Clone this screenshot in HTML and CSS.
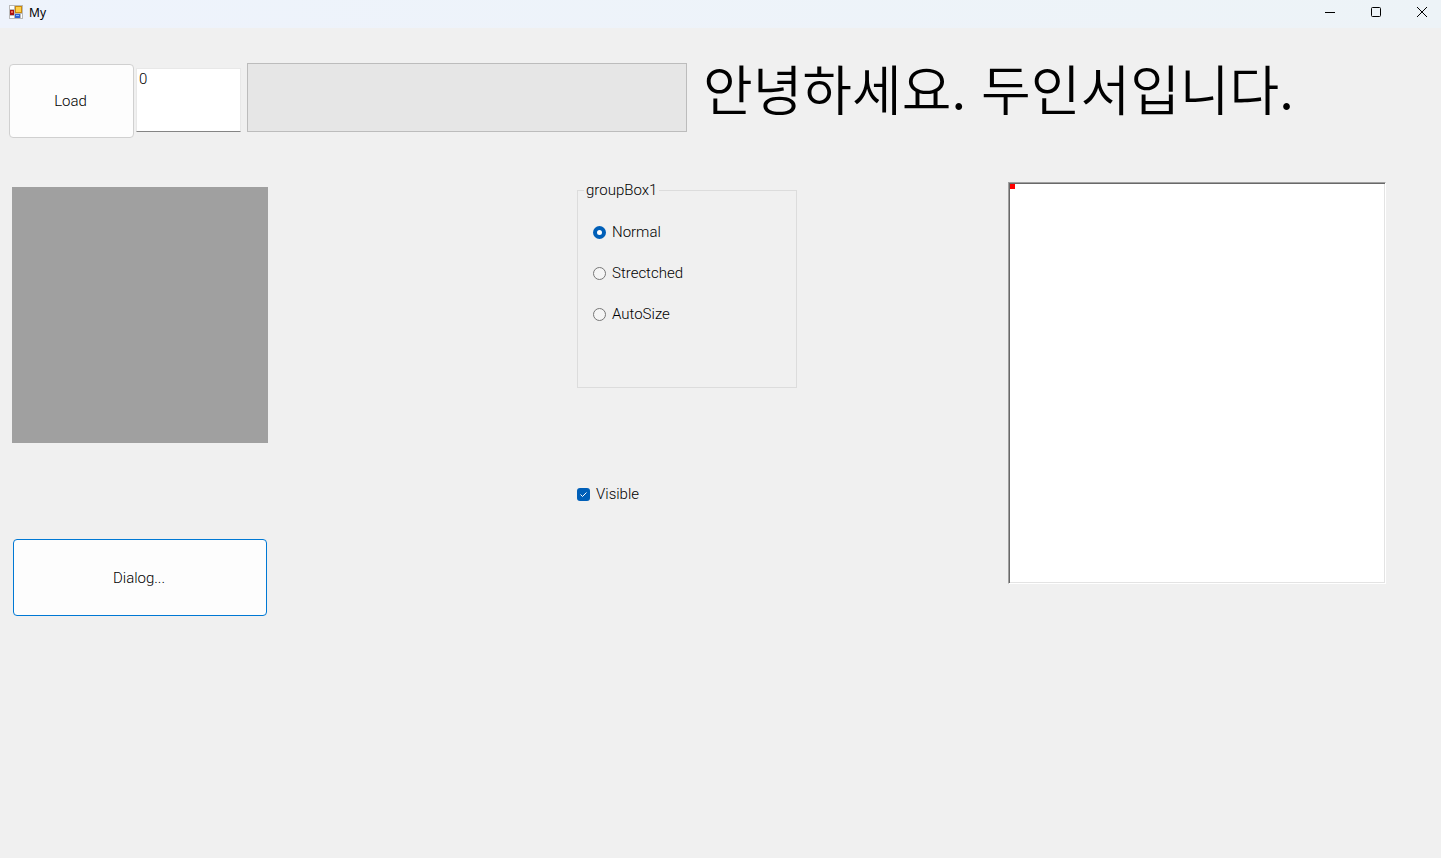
FILE: index.html
```html
<!DOCTYPE html>
<html lang="ko">
<head>
<meta charset="utf-8">
<meta name="viewport" content="width=device-width, initial-scale=1">
<title>My</title>
<link rel="stylesheet" href="styles.css">
</head>
<body>
<header class="titlebar">
  <svg class="app-icon" viewBox="0 0 14 14" aria-hidden="true">
    <rect width="14" height="14" fill="#b9b9b9"/>
    <path d="M1 1h4v3H1zM1 11h4v2H1zM12 9h1v4h-1z" fill="#fff"/>
    <rect x="6" y="1" width="7" height="7" fill="#c98a10"/>
    <rect x="7" y="2" width="5" height="5" fill="#ffd04a"/>
    <rect x="1" y="5" width="4" height="5" fill="#a91010"/>
    <rect x="2" y="6" width="2" height="2" fill="#f06a50"/>
    <rect x="6" y="9" width="5" height="4" fill="#2e62d0"/>
    <rect x="7" y="10" width="3" height="1" fill="#8ab8ff"/>
  </svg>
  <h1 class="title">My</h1>
  <div class="window-buttons">
    <button class="window-button" type="button" aria-label="Minimize"><svg class="glyph" viewBox="0 0 12 12"><path d="M1 6.5h10"/></svg></button>
    <button class="window-button" type="button" aria-label="Maximize"><svg class="glyph" viewBox="0 0 12 12"><rect x="1.5" y="1.5" width="9" height="9" rx="1"/></svg></button>
    <button class="window-button" type="button" aria-label="Close"><svg class="glyph" viewBox="0 0 12 12"><path d="M1 1l10 10M11 1L1 11"/></svg></button>
  </div>
</header>
<main class="form">
  <section class="toolbar">
    <button class="button load" type="button">Load</button>
    <textarea class="number" aria-label="Value">0</textarea>
    <div class="progress" role="progressbar" aria-label="Progress" aria-valuenow="0"></div>
    <p class="greeting">안녕하세요. 두인서입니다.</p>
  </section>
  <section class="content">
    <div class="column">
      <div class="picture"></div>
      <button class="button dialog" type="button">Dialog...</button>
    </div>
    <div class="column">
      <fieldset class="group">
        <legend class="legend">groupBox1</legend>
        <label class="option"><input class="radio" type="radio" name="mode" checked>Normal</label>
        <label class="option"><input class="radio" type="radio" name="mode">Strectched</label>
        <label class="option"><input class="radio" type="radio" name="mode">AutoSize</label>
      </fieldset>
      <label class="option visible">
        <span class="checkbox">
          <input class="check" type="checkbox" checked>
          <svg class="tick" viewBox="0 0 13 13" aria-hidden="true"><path d="M3.5 6.5l2 2 4-4"/></svg>
        </span>Visible</label>
    </div>
    <div class="column">
      <div class="panel"><div class="marker"></div></div>
    </div>
  </section>
</main>
</body>
</html>
```
FILE: styles.css
```css
* { box-sizing: border-box; }
body {
  margin: 0;
  min-height: 100vh;
  background: #f0f0f0;
  color: #000;
  font: 300 15px/20px Roboto, "Noto Sans CJK KR", sans-serif;
}
button, textarea { font: inherit; color: inherit; }
.titlebar {
  display: flex;
  align-items: center;
  height: 28px;
  padding-left: 9px;
  background: linear-gradient(90deg, #eef3fc, #edf3f7);
}
.app-icon { width: 14px; height: 14px; margin-bottom: 4px; }
.title { margin: 0 0 3px 6px; font: 400 12px/16px "Noto Sans", sans-serif; }
.window-buttons { display: flex; margin-left: auto; }
.window-button {
  display: flex;
  justify-content: center;
  align-items: center;
  width: 46px;
  height: 28px;
  padding: 0 0 4px 8px;
  border: 0;
  background: none;
}
.glyph { width: 12px; height: 12px; fill: none; stroke: #000; stroke-width: 1; }
.toolbar {
  display: flex;
  align-items: flex-start;
  padding: 35px 9px 0;
}
.button {
  border: 1px solid #d0d0d0;
  border-radius: 4px;
  background: #fdfdfd;
}
.load { width: 125px; height: 74px; margin-top: 1px; padding: 0 2px 0 0; }
.number {
  width: 105px;
  height: 64px;
  margin: 5px 6px 0 2px;
  padding: 0 2px;
  border: 1px solid #e8e8e8;
  border-bottom-color: #858585;
  background: #fff;
  resize: none;
  overflow: hidden;
}
.progress {
  width: 440px;
  height: 69px;
  border: 1px solid #bcbcbc;
  background: #e6e6e6;
}
.greeting {
  margin: 0 0 0 16px;
  font: 350 54px/50px "Noto Sans CJK KR DemiLight", "Noto Sans CJK KR", sans-serif;
  white-space: nowrap;
}
.content {
  display: grid;
  grid-template-columns: 565fr 431fr 421fr;
  padding: 44px 12px 24px;
}
.column { display: flex; flex-direction: column; align-items: flex-start; }
.picture { width: 256px; height: 256px; margin-top: 5px; background: #a0a0a0; }
.dialog {
  width: 254px;
  height: 77px;
  margin: 96px 0 0 1px;
  padding: 0 2px 0 0;
  border-color: #0078d4;
}
.group {
  display: flex;
  flex-direction: column;
  gap: 21px;
  width: 220px;
  height: 208px;
  margin: -2px 0 0;
  padding: 22px 15px;
  border: 1px solid #dcdcdc;
}
.legend { margin-left: -9px; padding: 0 2px; }
.option { display: flex; align-items: center; gap: 6px; }
.radio {
  appearance: none;
  width: 13px;
  height: 13px;
  margin: 0;
  border: 1px solid #777;
  border-radius: 50%;
  background: #f5f5f5;
}
.radio:checked { border: 4px solid #005fb8; background: #fff; }
.visible { margin-top: 96px; }
.checkbox { display: grid; }
.check, .tick { grid-area: 1 / 1; width: 13px; height: 13px; margin: 0; }
.check { appearance: none; border-radius: 3px; background: #005fb8; }
.tick { fill: none; stroke: none; pointer-events: none; }
.check:checked + .tick { stroke: #fff; }
.panel {
  width: 378px;
  height: 402px;
  border: 1px solid;
  border-color: #a0a0a0 #fff #fff #a0a0a0;
  background: #fff;
  box-shadow: inset 1px 1px #696969, inset -1px -1px #e3e3e3;
  padding: 1px;
}
.marker { width: 5px; height: 5px; background: #f00; }
```
